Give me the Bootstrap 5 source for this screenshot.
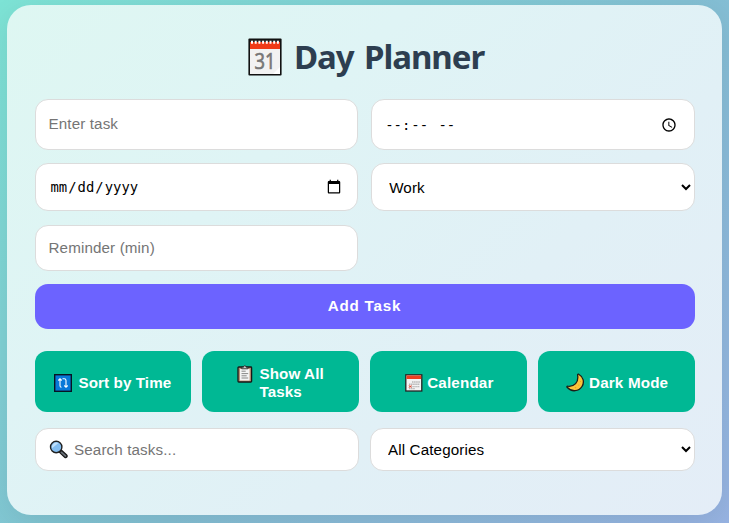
<!DOCTYPE html>
<html lang="en">
<head>
<meta charset="utf-8">
<meta name="viewport" content="width=device-width, initial-scale=1">
<title>Day Planner</title>
<link href="https://cdn.jsdelivr.net/npm/bootstrap@5.3.0/dist/css/bootstrap.min.css" rel="stylesheet">
<style>
html, body { height: 100%; }
body {
  font-family: "Liberation Sans", Arial, sans-serif;
  font-size: 15.2px;
  padding: 5px 7px 8px;
  overflow: hidden;
  background: linear-gradient(135deg, #7de3d5 0%, #83bfd3 55%, #97b3e2 100%);
}
.planner {
  height: 510px;
  padding: 28px 27.5px;
  border-radius: 24px;
  background: linear-gradient(135deg, #def7f2 0%, #dff4f5 33%, #e1f0f6 65%, #e4edf7 100%);
  box-shadow: 0 8px 30px rgba(0, 0, 0, .08);
}
.planner-title {
  font-family: "Noto Sans", "Open Sans", sans-serif;
  font-weight: 700;
  font-size: 33px;
  line-height: 48px;
  letter-spacing: -1.05px;
  word-spacing: 3px;
  color: #2d3e50;
  height: 66px;
  gap: 12px;
  padding-left: 3px;
}
.task-grid { display: grid; grid-template-columns: 1fr 1fr; gap: 13.4px; grid-template-rows: 51px 48px 46px 45px; }
.field.form-control {
  height: 100%;
  padding: 0 13px;
  border: 1px solid #dcdcdc;
  border-radius: 13px;
  background: #fff;
  color: #000;
  font-size: 15.2px;
  letter-spacing: .12px;
  line-height: normal;
}
.field.field-task { padding-bottom: 2px; }
.field::placeholder { color: #757575; opacity: 1; }
select.field.form-control { appearance: auto; -webkit-appearance: auto; padding-right: 1px; }
input.field-mono.form-control { font-family: "DejaVu Sans Mono", monospace; font-size: 13.9px; letter-spacing: 0; padding-left: 14px; }
input.field-time.form-control { letter-spacing: .3px; padding-left: 13px; padding-right: 14px; }
.field-mono::-webkit-calendar-picker-indicator { width: 16px; height: 16px; margin-right: 0; }
.field-mono::-webkit-datetime-edit-month-field,
.field-mono::-webkit-datetime-edit-day-field,
.field-mono::-webkit-datetime-edit-year-field { padding: 0 1px; }
.btn-add, .btn-tool { --bs-btn-color: #fff; --bs-btn-border-width: 0; font-weight: 700; font-size: 15.2px; }
.btn-add { grid-column: 1 / -1; background: #6c63ff; border-radius: 13px; letter-spacing: .8px; padding: 0; }
.tools { display: grid; grid-template-columns: repeat(4, 1fr); gap: 11px; height: 61px; margin-top: 22px; }
.btn-tool { background: #00b894; border-radius: 12px; line-height: 18px; padding: 2px 8px 0; text-align: left; letter-spacing: .1px; }
.btn-tool.two-line { padding-top: 14px; }
.btn-tool.one-line { padding-left: 10px; letter-spacing: .18px; }
.btn-tool:hover, .btn-add:hover { color: #fff; }
.tool-icon { margin-right: 6px; }
.filters { display: grid; grid-template-columns: 1fr 1fr; gap: 11px; height: 43px; margin-top: 16px; }
.filters .search.form-control { padding-left: 38.5px; }
.search-icon { left: 14px; top: 12px; }
svg { flex: none; display: block; }
</style>
<script src="https://cdn.jsdelivr.net/npm/bootstrap@5.3.0/dist/js/bootstrap.bundle.min.js"></script>
</head>
<body>
<main class="planner">
  <h1 class="planner-title d-flex justify-content-center mb-0">
    <svg width="34" height="38" viewBox="0 0 34 38" style="margin-top:5px">
      <rect x=".4" y=".4" width="33.2" height="37.2" rx="1" fill="#111"/>
      <rect x="2" y="2" width="30" height="34" fill="#f2f2f2"/>
      <path d="M2 3h30v8H2z" fill="#f03a17"/>
      <path d="M2 2h30v2H2z" fill="#222"/>
      <path d="M3 4.2h28" stroke="#fff" stroke-width="3" stroke-dasharray="2 1.7"/>
      <path d="M32 29v7h-7z" fill="#fff"/>
      <text x="17" y="31" text-anchor="middle" font-family="Open Sans" font-size="22" font-weight="400" letter-spacing="0" fill="#777" stroke="#777" stroke-width=".7" textLength="21" lengthAdjust="spacingAndGlyphs">31</text>
    </svg>
    <span>Day Planner</span>
  </h1>

  <form class="task-grid">
    <input class="field field-task form-control" type="text" placeholder="Enter task">
    <input class="field field-mono field-time form-control" type="time">
    <input class="field field-mono form-control" type="date">
    <select class="field form-control"><option>Work</option></select>
    <input class="field form-control" type="text" placeholder="Reminder (min)">
    <button class="btn btn-add" type="button">Add Task</button>
  </form>

  <div class="tools">
    <button class="btn btn-tool d-flex align-items-center justify-content-center" type="button">
      <svg width="18" height="18" viewBox="0 0 18 18" class="tool-icon"><rect x=".7" y=".7" width="16.6" height="16.6" fill="#0878d8" stroke="#071322" stroke-width="1.4"/><path d="M4.3 6.5 6 4.7l1.7 1.8M6 5v6.8q0 1.4 1.5 1.4M8.5 4.8h1.7q1.8 0 1.8 1.7V13M10.3 11.5 12 13.3l1.7-1.8" fill="none" stroke="#fff" stroke-width="1.1"/></svg>
      <span>Sort by Time</span>
    </button>
    <button class="btn btn-tool two-line d-flex align-items-start justify-content-center" type="button">
      <svg width="16" height="18" viewBox="0 0 16 18" class="tool-icon"><rect x="1" y="2" width="13.6" height="15" rx=".8" fill="#b98f72" stroke="#171717" stroke-width="1.3"/><path d="M3 4h9.6v11.5H3z" fill="#f4f4f4"/><path d="M4.7 3.8V2.2h1.8q.1-1.6 1.3-1.6t1.3 1.6h1.8v1.6z" fill="#ccc" stroke="#222" stroke-width=".8"/><path d="M4.5 6.2h4.2M4.5 8.6h6.7M4.5 10.8h5.2M4.5 13h6.7" stroke="#888"/></svg>
      <span>Show All<br>Tasks</span>
    </button>
    <button class="btn btn-tool one-line d-flex align-items-center justify-content-center" type="button">
      <svg width="18" height="18" viewBox="0 0 18 18" class="me-1"><rect x=".8" y=".8" width="16" height="16.2" fill="#f3f3f3" stroke="#222" stroke-width="1.3"/><path d="M1.5 1.5h14.6V5H1.5z" fill="#ee3e20"/><path d="M7 8h7.8M4 10.3h10.8M4 12.6h10.8M4 14.6h6" stroke="#b5b5b5" stroke-width="1.4" stroke-dasharray="1.5 .6"/><path d="m4 11.3 2.4 2.4m0-2.4L4 13.7" stroke="#ec3c20" stroke-width="1"/></svg>
      <span>Calendar</span>
    </button>
    <button class="btn btn-tool one-line d-flex align-items-center justify-content-center" type="button">
      <svg width="19" height="19" viewBox="0 0 19 19" class="me-1"><path d="M12.7 1.2c4.5 2.5 6.1 7.8 3.3 12.3-3.1 4.9-10.4 6-14.9.8-.5-.6-.1-1.2.6-1.1C8.4 14 12.8 9.4 11.6 2c-.1-.7.5-1.1 1.1-.8Z" fill="#fcc33b" stroke="#1d1d18" stroke-width="1.3"/><circle cx="14.5" cy="8.5" r=".6" fill="#e9a421"/><circle cx="9.5" cy="14.6" r=".8" fill="#e9a421"/><circle cx="12.8" cy="12" r=".6" fill="#e9a421"/></svg>
      <span>Dark Mode</span>
    </button>
  </div>

  <div class="filters">
    <div class="position-relative">
      <input class="field search form-control" type="text" placeholder="Search tasks...">
      <svg class="search-icon position-absolute" width="20" height="20" viewBox="0 0 20 20"><path d="m11.5 11.2 5.2 4.9" stroke="#171717" stroke-width="4.2" stroke-linecap="round"/><path d="m12.5 12.4 3.9 3.5" stroke="#687078" stroke-width="1.9" stroke-linecap="round"/><circle cx="7.2" cy="7" r="5.7" fill="#83bdf0" stroke="#202020" stroke-width="1.4"/><path d="M3 8.3a4.6 4.6 0 0 1 6.5-5.2z" fill="#c0e0fb"/></svg>
    </div>
    <select class="field form-control"><option>All Categories</option></select>
  </div>
</main>
</body>
</html>
